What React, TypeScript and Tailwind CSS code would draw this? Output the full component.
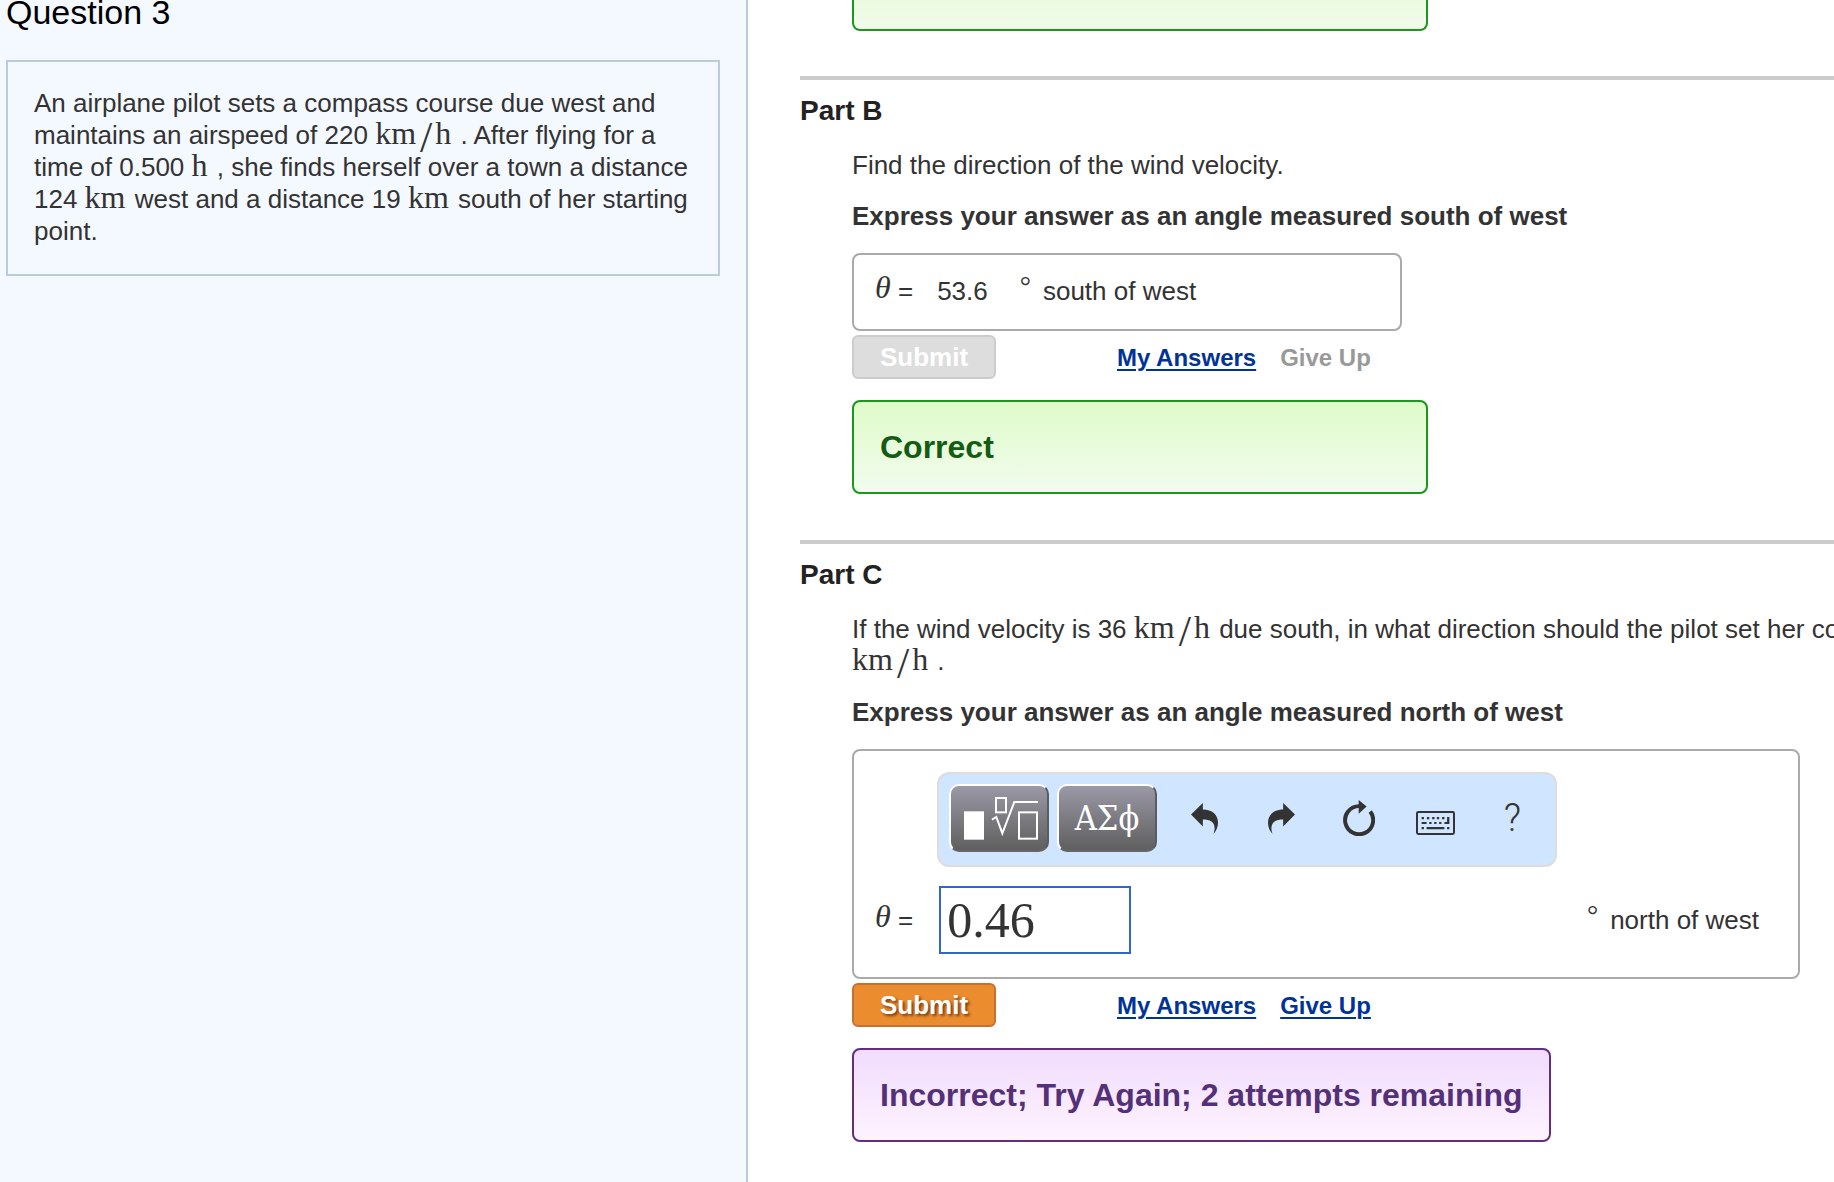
import React, { useState } from 'react';

interface ChildrenProps {
  children: React.ReactNode;
}

const Unit: React.FC<ChildrenProps> = ({ children }) => (
  <span className="mr-[2px] font-['Liberation_Serif',serif] text-[32px] leading-7">{children}</span>
);

const KmPerHour: React.FC = () => (
  <span className="whitespace-nowrap">
    <Unit>km</Unit>
    <span className="mr-[3px] ml-[2px] inline-block align-[-8px] font-['Liberation_Serif',serif] text-[44px] leading-6">/</span>
    <Unit>h</Unit>
  </span>
);

const Theta: React.FC = () => (
  <>
    <i className="align-[2px] font-['Liberation_Serif',serif] text-[32px] leading-6">θ</i> =
  </>
);

const Degree: React.FC = () => (
  <span className="mr-3 align-[5px] font-['Liberation_Serif',serif] text-[28px] leading-5">°</span>
);

const UndoArrow: React.FC<{ className?: string }> = ({ className }) => (
  <svg viewBox="0 0 82 94" className={className} fill="currentColor">
    <path d="M0 35 36 0v20C64 20 82 36 82 60c0 14-6 26-14 34 6-14 5-29-5-37-8-6-16-7-27-7v21z" />
  </svg>
);

const ResetIcon: React.FC = () => (
  <svg viewBox="0 0 96 109" className="h-9 w-8" fill="none">
    <path d="M82 35A42.500 42.500 0 1 1 48 18.500" stroke="currentColor" strokeWidth={12} />
    <path d="M47 0 71 20 47 42z" fill="currentColor" />
  </svg>
);

const KeyboardIcon: React.FC = () => (
  <svg viewBox="0 0 118 72" className="mt-[10px] h-6 w-[39px]" fill="currentColor">
    <rect x="3" y="3" width="112" height="66" rx="4" fill="none" stroke="currentColor" strokeWidth={6} />
    <path d="M17 18h7v7h-7zM33 18h7v7h-7zM49 18h7v7h-7zM63 18h7v7h-7zM79 18h7v7h-7zM94 18h7v21H86v-6h8z" />
    <path d="M17 33h15v6H17zM40 33h7v6h-7zM55 33h7v6h-7zM70 33h7v6h-7z" />
    <path d="M17 48h7v7h-7zM32 48h54v7H32zM94 48h7v7h-7z" />
  </svg>
);

const TemplateIcon: React.FC = () => (
  <svg viewBox="0 0 222 129" className="h-[43px] w-[74px]" fill="none" stroke="currentColor">
    <rect x="0" y="43" width="60" height="85" fill="currentColor" stroke="none" />
    <rect x="96" y="3" width="30" height="43" strokeWidth={6} />
    <path d="M84 68 97 60 115 109 151 15H222" strokeWidth={6} />
    <rect x="165" y="46" width="54" height="79" strokeWidth={6} />
  </svg>
);

const PaletteButton: React.FC<ChildrenProps & { label: string }> = ({ label, children }) => (
  <button
    type="button"
    aria-label={label}
    className="flex h-[68px] w-[100px] items-center justify-center rounded-[10px] border-2 border-t-white border-r-[#5c5c60] border-b-[#666] border-l-white bg-linear-to-b from-[#9c99a7] to-[#5f5f5f] text-white"
  >
    {children}
  </button>
);

const ToolButton: React.FC<ChildrenProps & { label: string }> = ({ label, children }) => (
  <button type="button" aria-label={label} className="flex h-[68px] w-[77px] items-center justify-center text-[#333]">
    {children}
  </button>
);

const Toolbar: React.FC = () => (
  <div className="ml-[83px] flex w-fit rounded-xl border-2 border-[#ddd] bg-[#d0e5ff] pt-[10px] pr-1 pb-[13px] pl-[10px]">
    <div className="mr-[9px] flex gap-2">
      <PaletteButton label="Templates">
        <span className="pl-1">
          <TemplateIcon />
        </span>
      </PaletteButton>
      <PaletteButton label="Symbols">
        <span className="font-['DejaVu_Serif_Condensed','DejaVu_Serif',serif] text-[34px] leading-8">ΑΣϕ</span>
      </PaletteButton>
    </div>
    <ToolButton label="Undo">
      <UndoArrow className="h-[31px] w-[27px]" />
    </ToolButton>
    <ToolButton label="Redo">
      <UndoArrow className="h-[31px] w-[27px] -scale-x-100" />
    </ToolButton>
    <ToolButton label="Reset">
      <ResetIcon />
    </ToolButton>
    <ToolButton label="Keyboard shortcuts">
      <KeyboardIcon />
    </ToolButton>
    <ToolButton label="Help">
      <span className="font-['Roboto',sans-serif] text-[38px] leading-9 font-light">?</span>
    </ToolButton>
  </div>
);

const Part: React.FC<ChildrenProps & { title: string }> = ({ title, children }) => (
  <section className="border-t-4 border-[#ccc] pt-[15px] pb-[46px]">
    <h2 className="text-[28px] leading-8 font-bold text-[#222]">{title}</h2>
    <div className="mt-[22px] pl-[52px]">{children}</div>
  </section>
);

const Hint: React.FC<ChildrenProps> = ({ children }) => (
  <p className="mt-[19px] mb-[21px] font-bold">{children}</p>
);

const Actions: React.FC<{ disabled?: boolean }> = ({ disabled = false }) => (
  <div className="mt-1 mb-[21px] flex items-baseline text-2xl font-bold">
    <button
      type="button"
      disabled={disabled}
      className={`h-11 w-36 rounded-md border-2 text-[26px] leading-8 text-white ${
        disabled
          ? 'border-[#ccc] bg-[#ddd]'
          : 'border-[#c67033] bg-[#eb8d2f] [text-shadow:2px_2px_3px_#7a3a10]'
      }`}
    >
      Submit
    </button>
    <a href="#answers" className="ml-[121px] text-[#039] underline decoration-2 underline-offset-3">
      My Answers
    </a>
    {disabled ? (
      <span className="ml-6 text-[#999]">Give Up</span>
    ) : (
      <a href="#give-up" className="ml-6 text-[#039] underline decoration-2 underline-offset-3">
        Give Up
      </a>
    )}
  </div>
);

const App: React.FC = () => {
  const [answer, setAnswer] = useState('0.46');

  return (
    <div className="grid min-h-screen grid-cols-[374fr_543fr] bg-white font-['Liberation_Sans',Arial,sans-serif] text-[26px] leading-8 text-[#333]">
      <aside className="min-w-0 border-r-2 border-[#b9cbde] bg-[#f4f8ff] pr-[26px] pl-[6px]">
        <h1 className="text-[34px] leading-6 text-black">Question 3</h1>
        <div className="mt-9 border-2 border-[#b9cbde] px-[26px] pt-[25px] pb-[27px]">
          <p>
            An airplane pilot sets a compass course due west and maintains an airspeed of 220 <KmPerHour /> . After
            flying for a time of 0.500 <Unit>h</Unit> , she finds herself over a town a distance 124 <Unit>km</Unit>{' '}
            west and a distance 19 <Unit>km</Unit> south of her starting point.
          </p>
        </div>
      </aside>

      <main className="min-w-0 overflow-hidden pl-[52px]">
        {/* tail of the Part A feedback */}
        <div className="mb-[45px] ml-[52px] h-[31px] w-[576px] rounded-b-lg border-2 border-t-0 border-[#1c961c] bg-linear-to-b from-[#ebfbe0] to-[#f1fbec]" />

        <Part title="Part B">
          <p>Find the direction of the wind velocity.</p>
          <Hint>Express your answer as an angle measured south of west</Hint>
          <div className="flex w-[550px] items-baseline rounded-lg border-2 border-[#aaa] pt-5 pb-[22px] pl-[21px]">
            <span>
              <Theta />
            </span>
            <span className="ml-6">53.6</span>
            <span className="ml-8">
              <Degree />
              south of west
            </span>
          </div>
          <Actions disabled />
          <div className="w-fit min-w-[576px] rounded-lg border-2 border-[#1c961c] bg-linear-to-b from-[#dffbc9] to-[#f2fcee] px-[26px] py-[29px] text-[32px] font-bold text-[#145c14]">
            Correct
          </div>
        </Part>

        <Part title="Part C">
          <p className="whitespace-nowrap">
            If the wind velocity is 36 <KmPerHour /> due south, in what direction should the pilot set her course
            <br />
            <KmPerHour /> .
          </p>
          <Hint>Express your answer as an angle measured north of west</Hint>
          <div className="mr-[34px] rounded-lg border-2 border-[#aaa] pt-[21px] pb-[23px]">
            <Toolbar />
            <div className="mt-[19px] flex items-center pr-[39px] pl-[21px]">
              <label htmlFor="theta">
                <Theta />
              </label>
              <input
                id="theta"
                type="text"
                value={answer}
                onChange={(e) => setAnswer(e.target.value)}
                className="ml-[26px] h-[68px] w-48 border-2 border-[#36c] bg-white pl-[6px] font-['Liberation_Serif',serif] text-[50px] outline-none"
              />
              <span className="ml-auto">
                <Degree />
                north of west
              </span>
            </div>
          </div>
          <Actions />
          <div className="w-fit min-w-[576px] rounded-lg border-2 border-[#632d80] bg-linear-to-b from-[#f1dcfd] to-[#fef3ff] px-[26px] py-[29px] text-[32px] font-bold text-[#533078]">
            Incorrect; Try Again; 2 attempts remaining
          </div>
        </Part>
      </main>
    </div>
  );
};

export default App;
